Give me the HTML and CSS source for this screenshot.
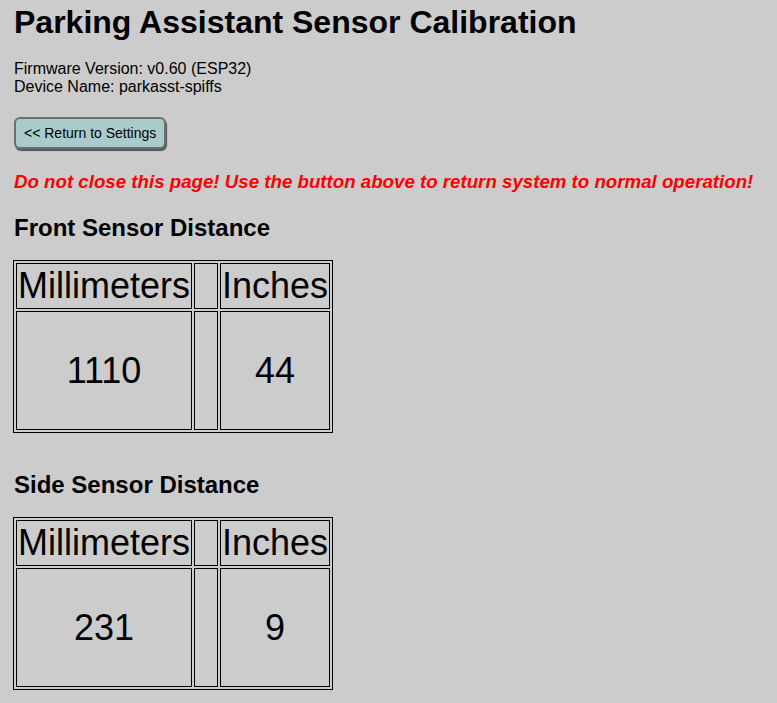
FILE: index.html
```html
<!DOCTYPE html>
<html>
<head>
<meta charset="utf-8">
<title>Parking Assistant Sensor Calibration</title>
<link rel="stylesheet" href="styles.css">
</head>
<body>
<h1>Parking Assistant Sensor Calibration</h1>

<p class="info">
    Firmware Version: v0.60 (ESP32)<br>
    Device Name: parkasst-spiffs
</p>

<button class="btn" onclick="location.href='/settings'">&lt;&lt; Return to Settings</button>

<p class="warning">Do not close this page! Use the button above to return system to normal operation!</p>

<h2>Front Sensor Distance</h2>
<table class="dist">
    <tr class="head">
        <td class="mm">Millimeters</td>
        <td class="gap"></td>
        <td class="in">Inches</td>
    </tr>
    <tr class="value">
        <td id="frontMm">1110</td>
        <td class="gap"></td>
        <td id="frontIn">44</td>
    </tr>
</table>

<h2 class="second">Side Sensor Distance</h2>
<table class="dist">
    <tr class="head">
        <td class="mm">Millimeters</td>
        <td class="gap"></td>
        <td class="in">Inches</td>
    </tr>
    <tr class="value">
        <td id="sideMm">231</td>
        <td class="gap"></td>
        <td id="sideIn">9</td>
    </tr>
</table>
</body>
</html>
```

FILE: styles.css
```css
body {
    margin: 0;
    padding: 0 13px;
    background-color: #cccccc;
    color: #000;
    font-family: "Liberation Sans", Arial, sans-serif;
}

h1 {
    font-size: 32px;
    margin: 4px 0 19px 1px;
}

.info {
    font-size: 16px;
    margin: 0 0 21px 1px;
}

.btn {
    display: block;
    font-family: "Liberation Sans", Arial, sans-serif;
    font-size: 14px;
    padding: 6px 8px;
    background-color: #a9cbcb;
    color: #000;
    border: 2px solid #6a7070;
    border-radius: 6px;
    box-shadow: 1px 2px 1px #555;
    cursor: pointer;
    margin-left: 1px;
}

.warning {
    color: #ff0000;
    font-size: 18.7px;
    font-weight: bold;
    font-style: italic;
    margin: 22px 0 21px 1px;
}

h2 {
    font-size: 24px;
    margin: 0 0 18px 1px;
}

h2.second {
    margin-top: 38px;
}

.dist {
    border: 1px solid #000;
    border-spacing: 2px;
    font-size: 36px;
    text-align: center;
}

.dist td {
    border: 1px solid #000;
    padding: 1px;
}

.dist .gap {
    width: 20px;
}

.dist .in {
    width: 106px;
}

.value td {
    height: 115px;
}
```
